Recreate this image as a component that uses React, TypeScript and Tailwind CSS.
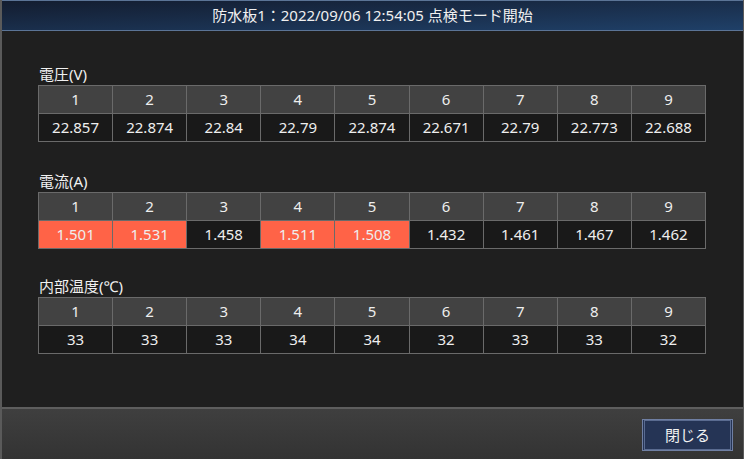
import React from 'react'

interface Section {
  label: string
  values: string[]
  alert?: boolean[]
}

const sections: Section[] = [
  {
    label: '電圧(V)',
    values: ['22.857', '22.874', '22.84', '22.79', '22.874', '22.671', '22.79', '22.773', '22.688'],
  },
  {
    label: '電流(A)',
    values: ['1.501', '1.531', '1.458', '1.511', '1.508', '1.432', '1.461', '1.467', '1.462'],
    alert: [true, true, false, true, true, false, false, false, false],
  },
  {
    label: '内部温度(℃)',
    values: ['33', '33', '33', '34', '34', '32', '33', '33', '32'],
  },
]

const font = { fontFamily: '"Noto Sans", "Noto Sans CJK JP", sans-serif' }

function DataTable({ section }: { section: Section }) {
  return (
    <table className="w-[668px] table-fixed border-collapse text-[15px] text-[#eeeeee]">
      <tbody>
        <tr className="h-[28px] bg-[#424242]">
          {section.values.map((_, i) => (
            <td key={i} className="border border-[#6a6a6a] p-0 text-center leading-none">
              {i + 1}
            </td>
          ))}
        </tr>
        <tr className="h-[28px]">
          {section.values.map((v, i) => (
            <td
              key={i}
              className={`border border-[#6a6a6a] p-0 text-center leading-none ${
                section.alert?.[i] ? 'bg-[#ff6347]' : 'bg-[#191919]'
              }`}
            >
              {v}
            </td>
          ))}
        </tr>
      </tbody>
    </table>
  )
}

export default function App() {
  return (
    <div
      className="w-[744px] h-[459px] flex flex-col bg-[#1f1f1f] border-l-2 border-r border-[#5a5a5a] mr-[2px] overflow-hidden"
      style={font}
    >
      {/* Title bar */}
      <div className="h-[31px] shrink-0 flex items-center justify-center bg-gradient-to-br from-[#131d30] to-[#1f4068] border-t border-b border-[#5b7496] text-[15px] text-[#f0f0f0]">
        防水板1：2022/09/06 12:54:05 点検モード開始
      </div>

      {/* Body */}
      <div className="flex-1 pl-[36px] pt-[32px]">
        {sections.map((s, idx) => (
          <div key={s.label} className={idx === 0 ? '' : idx === 1 ? 'mt-[28px]' : 'mt-[26px]'}>
            <div className="h-[22px] flex items-center pl-[1px] text-[15px] text-[#f0f0f0]">{s.label}</div>
            <DataTable section={s} />
          </div>
        ))}
      </div>

      {/* Footer */}
      <div className="h-[52px] shrink-0 flex justify-end items-start pt-[10px] pr-[10px] bg-gradient-to-b from-[#3f3f3f] to-[#333333] border-t-2 border-[#5e5e5e]">
        <button className="w-[91px] h-[32px] flex items-center justify-center bg-[#253455] border border-[#6f7fa3] text-[15px] text-[#f2f2f2]">
          <span className="w-full h-full flex items-center justify-center border border-[#5a6b90] m-[1px]">閉じる</span>
        </button>
      </div>
    </div>
  )
}
